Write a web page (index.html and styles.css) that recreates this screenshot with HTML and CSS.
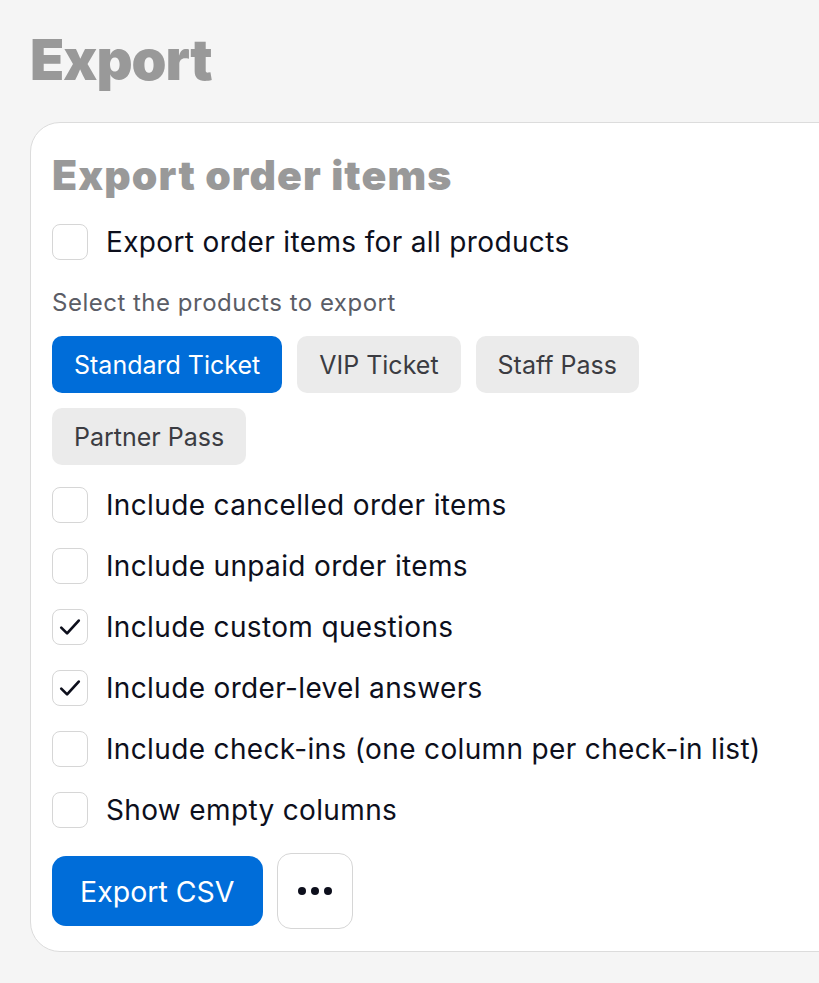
FILE: index.html
```html
<!DOCTYPE html>
<html lang="en">
<head>
    <meta charset="UTF-8">
    <title>Export</title>
    <link rel="stylesheet" href="styles.css">
</head>
<body>

<h1 class="page-title">Export</h1>

<section class="card">
    <h2 class="card-title">Export order items</h2>

    <label class="check-row">
        <span class="box"></span>
        <span>Export order items for all products</span>
    </label>

    <div class="hint">Select the products to export</div>

    <div class="pills">
        <button class="pill active">Standard Ticket</button>
        <button class="pill">VIP Ticket</button>
        <button class="pill">Staff Pass</button>
        <button class="pill">Partner Pass</button>
    </div>

    <div class="options">
        <label class="check-row">
            <span class="box"></span>
            <span>Include cancelled order items</span>
        </label>
        <label class="check-row">
            <span class="box"></span>
            <span>Include unpaid order items</span>
        </label>
        <label class="check-row">
            <span class="box checked">
                <svg viewBox="0 0 24 24" width="28" height="28"><path d="M4.5 12.5l5 5 10-11" fill="none" stroke="#0d0f1c" stroke-width="2.3" stroke-linecap="round" stroke-linejoin="round"/></svg>
            </span>
            <span>Include custom questions</span>
        </label>
        <label class="check-row">
            <span class="box checked">
                <svg viewBox="0 0 24 24" width="28" height="28"><path d="M4.5 12.5l5 5 10-11" fill="none" stroke="#0d0f1c" stroke-width="2.3" stroke-linecap="round" stroke-linejoin="round"/></svg>
            </span>
            <span>Include order-level answers</span>
        </label>
        <label class="check-row">
            <span class="box"></span>
            <span>Include check-ins (one column per check-in list)</span>
        </label>
        <label class="check-row">
            <span class="box"></span>
            <span>Show empty columns</span>
        </label>
    </div>

    <div class="actions">
        <button class="export-btn">Export CSV</button>
        <button class="more-btn">
            <svg viewBox="0 0 36 10" width="36" height="10"><circle cx="5" cy="5" r="4" fill="#0d0f1c"/><circle cx="18" cy="5" r="4" fill="#0d0f1c"/><circle cx="31" cy="5" r="4" fill="#0d0f1c"/></svg>
        </button>
    </div>
</section>

</body>
</html>
```

FILE: styles.css
```css
body {
    background-color: #f5f5f5;
    font-family: Inter, "Liberation Sans", sans-serif;
    margin: 0;
    padding: 0 0 0 30px;
    overflow: hidden;
    color: #0d0f1c;
}

.page-title {
    font-size: 56px;
    font-weight: 900;
    color: #999999;
    margin: 0;
    padding-top: 24px;
    line-height: 72px;
    letter-spacing: -1px;
}

.card {
    margin-top: 26px;
    width: 900px;
    background-color: white;
    border: 1px solid #dcdcdc;
    border-radius: 30px;
    padding: 22px 21px 22px 21px;
    box-sizing: border-box;
}

.card-title {
    font-size: 41px;
    font-weight: 900;
    color: #999999;
    margin: 8px 0 27px 0;
    line-height: 44px;
    letter-spacing: 1.1px;
}

.check-row {
    display: flex;
    align-items: center;
    gap: 18px;
    font-size: 28px;
    letter-spacing: 0.35px;
    height: 36px;
}

.box {
    width: 34px;
    height: 34px;
    border: 1px solid #d6d6d6;
    border-radius: 8px;
    display: flex;
    align-items: center;
    justify-content: center;
    flex-shrink: 0;
}

.hint {
    font-size: 24px;
    letter-spacing: 0.5px;
    color: #5b5d66;
    margin-top: 28px;
    line-height: 30px;
}

.pills {
    display: flex;
    flex-wrap: wrap;
    gap: 15px;
    width: 620px;
    margin-top: 18px;
}

.pill {
    font-family: Inter, "Liberation Sans", sans-serif;
    font-size: 25px;
    height: 57px;
    padding: 0 22px;
    border: none;
    border-radius: 10px;
    background-color: #ebebeb;
    color: #3b3c42;
}

.pill.active {
    background-color: #006dd9;
    color: white;
}

.options {
    display: flex;
    flex-direction: column;
    gap: 25px;
    margin-top: 22px;
}

.actions {
    display: flex;
    align-items: center;
    gap: 14px;
    margin-top: 25px;
}

.export-btn {
    font-family: Inter, "Liberation Sans", sans-serif;
    font-size: 28.5px;
    height: 70px;
    padding: 0 28px;
    border: none;
    border-radius: 14px;
    background-color: #006dd9;
    color: white;
}

.more-btn {
    width: 76px;
    height: 76px;
    border: 1px solid #d6d6d6;
    border-radius: 14px;
    background-color: white;
    display: flex;
    align-items: center;
    justify-content: center;
}
```
